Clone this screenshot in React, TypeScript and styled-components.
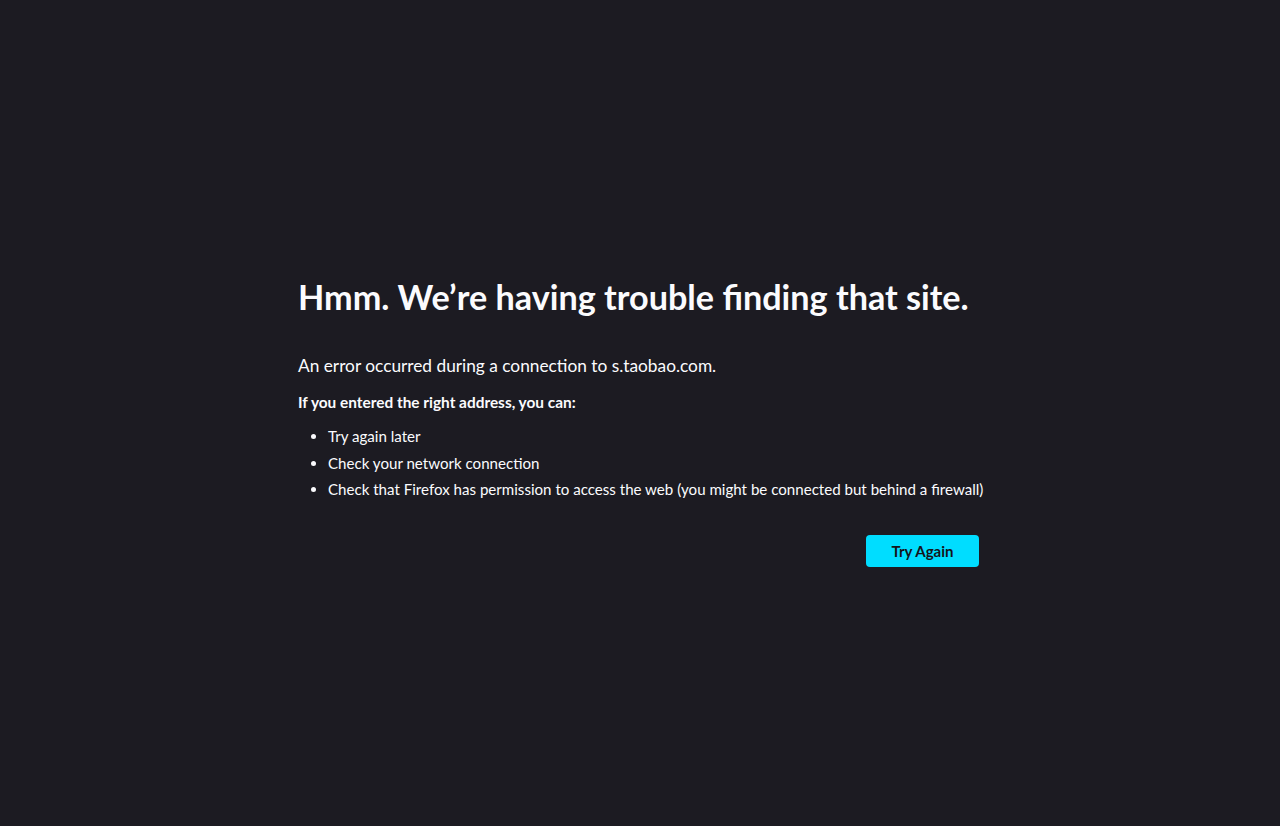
import React from "react";
import styled, { createGlobalStyle } from "styled-components";

const Global = createGlobalStyle`
  html, body { margin: 0; padding: 0; background: #1c1b22; }
  body { font-family: Lato, "Open Sans", sans-serif; color: #fbfbfe; }
`;

const Page = styled.main`
  min-height: 826px;
  box-sizing: border-box;
  display: flex;
  justify-content: center;
  padding-top: 276px;
`;

const Container = styled.div`
  width: 684px;
  display: flex;
  flex-direction: column;
`;

const Title = styled.h1`
  margin: 0;
  font-size: 34.2px;
  font-weight: 700;
  line-height: 42px;
  white-space: nowrap;
`;

const Intro = styled.p`
  margin: 36px 0 0;
  font-size: 17.3px;
  line-height: 24px;
  white-space: nowrap;
`;

const Subhead = styled.p`
  margin: 14px 0 0;
  font-size: 15.4px;
  font-weight: 700;
  line-height: 20px;
  white-space: nowrap;
`;

const List = styled.ul`
  margin: 11px 0 0;
  padding: 0 0 0 30px;
  list-style: disc;
`;

const Item = styled.li`
  font-size: 15.1px;
  line-height: 26.5px;
  white-space: nowrap;
`;

const Actions = styled.div`
  display: flex;
  justify-content: flex-end;
  margin-top: 32px;
  padding-right: 3px;
`;

const Button = styled.button`
  width: 113px;
  height: 32px;
  border: none;
  border-radius: 4px;
  background: #00ddff;
  color: #15141a;
  font-family: inherit;
  font-size: 15px;
  font-weight: 700;
  cursor: pointer;
`;

export default function App() {
  return (
    <>
      <Global />
      <Page>
        <Container>
          <Title>Hmm. We’re having trouble finding that site.</Title>
          <Intro>An error occurred during a connection to s.taobao.com.</Intro>
          <Subhead>If you entered the right address, you can:</Subhead>
          <List>
            <Item>Try again later</Item>
            <Item>Check your network connection</Item>
            <Item>
              Check that Firefox has permission to access the web (you might be
              connected but behind a firewall)
            </Item>
          </List>
          <Actions>
            <Button>Try Again</Button>
          </Actions>
        </Container>
      </Page>
    </>
  );
}
